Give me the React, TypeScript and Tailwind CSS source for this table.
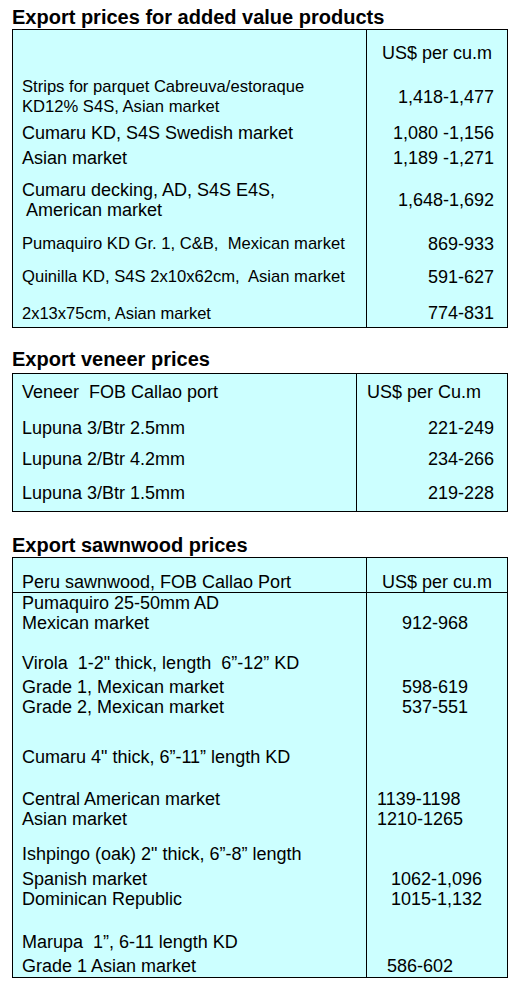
import { ReactNode } from 'react'

type Row = {
  pt: string
  left: ReactNode
  value?: string
  valueCls?: string
  textCls?: string
}

function Title({ children, cls }: { children: ReactNode; cls: string }) {
  return <h2 className={`pl-[12px] text-[20px] font-bold leading-[23px] text-black ${cls}`}>{children}</h2>
}

const addedValue: Row[] = [
  {
    pt: 'pt-[14px]',
    left: (
      <>
        <div>Strips for parquet Cabreuva/estoraque</div>
        <div>KD12% S4S, Asian market</div>
      </>
    ),
    value: '1,418-1,477',
    textCls: 'text-[16.6px]',
  },
  { pt: 'pt-[6px]', left: 'Cumaru KD, S4S Swedish market', value: '1,080 -1,156' },
  { pt: 'pt-[5px]', left: 'Asian market', value: '1,189 -1,271' },
  {
    pt: 'pt-[12px]',
    left: (
      <>
        <div>Cumaru decking, AD, S4S E4S,</div>
        <div> American market</div>
      </>
    ),
    value: '1,648-1,692',
  },
  { pt: 'pt-[14px]', left: 'Pumaquiro KD Gr. 1, C&B,  Mexican market', value: '869-933', textCls: 'text-[16.6px]' },
  { pt: 'pt-[13px]', left: 'Quinilla KD, S4S 2x10x62cm,  Asian market', value: '591-627', textCls: 'text-[16.6px]' },
  { pt: 'pt-[16px] pb-[4px]', left: '2x13x75cm, Asian market', value: '774-831', textCls: 'text-[16.5px]' },
]

const veneer: Row[] = [
  { pt: 'pt-[16px]', left: 'Lupuna 3/Btr 2.5mm', value: '221-249' },
  { pt: 'pt-[11px]', left: 'Lupuna 2/Btr 4.2mm', value: '234-266' },
  { pt: 'pt-[14px] pb-[8px]', left: 'Lupuna 3/Btr 1.5mm', value: '219-228' },
]

const sawnwood: Row[] = [
  { pt: 'pt-0', left: 'Pumaquiro 25-50mm AD' },
  { pt: 'pt-0', left: 'Mexican market', value: '912-968', valueCls: 'pl-[35px]' },
  { pt: 'pt-[20px]', left: 'Virola  1-2" thick, length  6”-12” KD' },
  { pt: 'pt-[4px]', left: 'Grade 1, Mexican market', value: '598-619', valueCls: 'pl-[35px]' },
  { pt: 'pt-0', left: 'Grade 2, Mexican market', value: '537-551', valueCls: 'pl-[35px]' },
  { pt: 'pt-[30px]', left: 'Cumaru 4" thick, 6”-11” length KD' },
  { pt: 'pt-[22px]', left: 'Central American market', value: '1139-1198', valueCls: 'pl-[10px]' },
  { pt: 'pt-0', left: 'Asian market', value: '1210-1265', valueCls: 'pl-[10px]' },
  { pt: 'pt-[15px]', left: 'Ishpingo (oak) 2" thick, 6”-8” length' },
  { pt: 'pt-[5px]', left: 'Spanish market', value: '1062-1,096', valueCls: 'pl-[24px]' },
  { pt: 'pt-0', left: 'Dominican Republic', value: '1015-1,132', valueCls: 'pl-[24px]' },
  { pt: 'pt-[23px]', left: 'Marupa  1”, 6-11 length KD' },
  { pt: 'pt-[4px] pb-[1px]', left: 'Grade 1 Asian market', value: '586-602', valueCls: 'pl-[20px]' },
]

function App() {
  return (
    <main className="min-h-screen w-[528px] bg-white font-['Liberation_Sans',Arial,sans-serif] text-[18px] leading-[20px] text-black">
      <Title cls="pt-[6px]">Export prices for added value products</Title>
      <div className="mx-[12px] grid w-[496px] grid-cols-[354px_1fr] border border-black bg-[#ccffff]">
        <div className="border-r border-black pt-[13px]"></div>
        <div className="pt-[13px] text-center">US$ per cu.m</div>
        {addedValue.map((r, i) => (
          <div key={i} className="contents">
            <div className={`whitespace-pre border-r border-black pl-[9px] ${r.textCls ?? ''} ${r.pt}`}>{r.left}</div>
            <div className={`flex items-center justify-end pr-[13px] ${r.pt}`}>{r.value}</div>
          </div>
        ))}
      </div>

      <Title cls="mt-[20px] mb-[2px]">Export veneer prices</Title>
      <div className="mx-[12px] grid w-[496px] grid-cols-[344px_1fr] border border-black bg-[#ccffff]">
        <div className="whitespace-pre border-r border-black pl-[9px] pt-[8px]">Veneer  FOB Callao port</div>
        <div className="pl-[10px] pt-[8px]">US$ per Cu.m</div>
        {veneer.map((r, i) => (
          <div key={i} className="contents">
            <div className={`whitespace-pre border-r border-black pl-[9px] ${r.pt}`}>{r.left}</div>
            <div className={`flex items-center justify-end pr-[13px] ${r.pt}`}>{r.value}</div>
          </div>
        ))}
      </div>

      <Title cls="mt-[22px]">Export sawnwood prices</Title>
      <div className="mx-[12px] grid w-[496px] grid-cols-[354px_1fr] border border-black bg-[#ccffff]">
        <div className="border-b border-r border-black pl-[9px] pt-[14px]">Peru sawnwood, FOB Callao Port</div>
        <div className="border-b border-black pt-[14px] text-center">US$ per cu.m</div>
        {sawnwood.map((r, i) => (
          <div key={i} className="contents">
            <div className={`whitespace-pre border-r border-black pl-[9px] ${r.pt}`}>{r.left}</div>
            <div className={`${r.valueCls ?? ''} ${r.pt}`}>{r.value}</div>
          </div>
        ))}
      </div>
    </main>
  )
}

export default App
